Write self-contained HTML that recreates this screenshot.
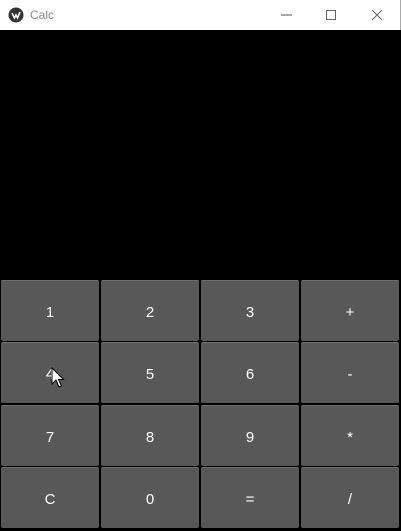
<!DOCTYPE html>
<html><head><style>
body{margin:0;width:401px;height:531px;background:#000;overflow:hidden;font-family:"Liberation Sans",sans-serif;position:relative}
#tb{position:absolute;left:0;top:0;width:400px;height:30px;background:#fff;border-right:1px solid #aaa}
.b{position:absolute;width:98px;height:61px;background:#585858;border-top:1px solid #6e6e6e;box-sizing:border-box;color:#fff;font-size:15px;display:flex;align-items:center;justify-content:center;border-radius:2px;padding-top:2px}
</style></head><body>
<div id="tb">
<svg style="position:absolute;left:8px;top:7px" width="16" height="16"><circle cx="8" cy="8" r="7.5" fill="#333"/><path d="M4 6 L6.5 11 L8 8 L9.5 11 L12 5" stroke="#fff" stroke-width="1.6" fill="none"/></svg>
<span style="position:absolute;left:30px;top:8px;font-size:12px;color:#888">Calc</span>
<svg style="position:absolute;left:278px;top:8px" width="110" height="14"><line x1="3" y1="7" x2="14" y2="7" stroke="#555"/><rect x="48.5" y="2.5" width="9" height="9" fill="none" stroke="#666"/><path d="M94 2 L104 12 M104 2 L94 12" stroke="#666"/></svg>
</div>
<div class="b" style="left:1px;top:280px">1</div>
<div class="b" style="left:101px;top:280px">2</div>
<div class="b" style="left:201px;top:280px">3</div>
<div class="b" style="left:301px;top:280px">+</div>
<div class="b" style="left:1px;top:342px">4</div>
<div class="b" style="left:101px;top:342px">5</div>
<div class="b" style="left:201px;top:342px">6</div>
<div class="b" style="left:301px;top:342px">-</div>
<div class="b" style="left:1px;top:405px">7</div>
<div class="b" style="left:101px;top:405px">8</div>
<div class="b" style="left:201px;top:405px">9</div>
<div class="b" style="left:301px;top:405px">*</div>
<div class="b" style="left:1px;top:467px">C</div>
<div class="b" style="left:101px;top:467px">0</div>
<div class="b" style="left:201px;top:467px">=</div>
<div class="b" style="left:301px;top:467px">/</div>
<svg style="position:absolute;left:51px;top:367px" width="14" height="22"><path d="M1 1 L1 17 L5 13 L8 20 L10.5 19 L7.5 12.5 L12.5 12.5 Z" fill="#fff" stroke="#000" stroke-width="1"/></svg>
</body></html>
